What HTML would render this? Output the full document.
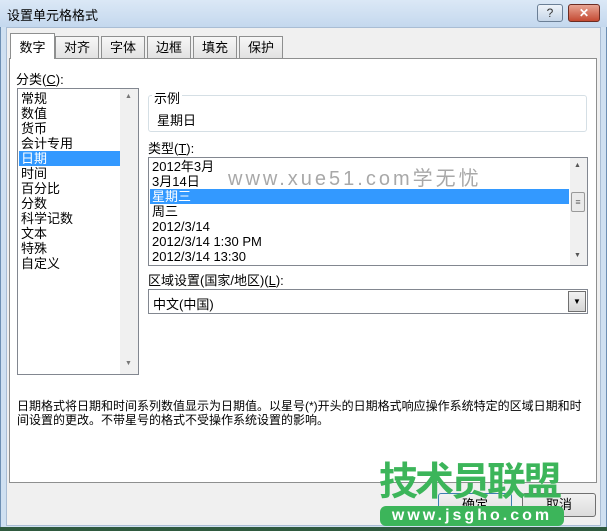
<!DOCTYPE html>
<html><head><meta charset="utf-8"><style>
*{margin:0;padding:0;box-sizing:border-box}
body{width:607px;height:531px;overflow:hidden;background:#f0f0f0;font-family:"Liberation Sans","Noto Sans CJK SC",sans-serif;font-size:12px;color:#000;position:relative}
.a{position:absolute}
.frame{left:0;top:0;width:607px;height:531px;background:#cfe0f1;border:1px solid #6d8fb3}
.title{left:0;top:0;width:607px;height:27px;background:linear-gradient(#dbe8f6,#c4d8ee)}
.body{left:6px;top:27px;width:595px;height:499px;background:#f0f0f0;border:1px solid #a9bdd4}
.tab{top:36px;height:22px;background:linear-gradient(#f7f7f7,#e2e2e2);border:1px solid #8e8f8f;border-bottom:none;text-align:center;line-height:21px;font-size:13px}
.panel{left:9px;top:58px;width:588px;height:425px;background:#fff;border:1px solid #8e8f8f}
.list{background:#fff;border:1px solid #828790}
.it{position:absolute;left:3px;height:15px;line-height:15px;font-size:13px;white-space:nowrap}
.sel{background:#3399ff;color:#fff}
.sb{background:#f0f0f0}
.btn{border:1px solid #707070;border-radius:3px;background:linear-gradient(#f2f2f2,#dcdcdc);text-align:center;line-height:22px;font-size:13px}
</style></head><body>
<div class="a frame"></div>
<div class="a title"></div>
<div class="a" style="left:7px;top:5px;font-size:13px">设置单元格格式</div>
<div class="a" style="left:537px;top:4px;width:26px;height:18px;border:1px solid #6b7f96;border-radius:3px;background:linear-gradient(#eef3f9,#c6d6e8);text-align:center;font-size:12px;line-height:16px;color:#333">?</div>
<div class="a" style="left:568px;top:4px;width:32px;height:18px;border:1px solid #6b2c23;border-radius:3px;background:linear-gradient(#e8a594,#c44a32);text-align:center;color:#fff;font-weight:bold;font-size:12px;line-height:16px">✕</div>
<div class="a body"></div>
<div class="a panel"></div>
<div class="a tab" style="left:10px;top:33px;width:45px;height:26px;background:#fff;z-index:2;line-height:27px">数字</div>
<div class="a tab" style="left:55px;width:44px">对齐</div>
<div class="a tab" style="left:101px;width:44px">字体</div>
<div class="a tab" style="left:147px;width:44px">边框</div>
<div class="a tab" style="left:193px;width:44px">填充</div>
<div class="a tab" style="left:239px;width:44px">保护</div>

<div class="a" style="left:16px;top:69px;font-size:13px">分类(<u>C</u>):</div>
<div class="a list" style="left:17px;top:88px;width:122px;height:287px">
<div class="a sb" style="left:102px;top:0;width:18px;height:285px"></div>
<div class="a" style="left:107px;top:4px;font-size:7px;color:#777">▲</div>
<div class="a" style="left:107px;top:271px;font-size:7px;color:#777">▼</div>
<div class="it" style="top:2px">常规</div>
<div class="it" style="top:17px">数值</div>
<div class="it" style="top:32px">货币</div>
<div class="it" style="top:47px">会计专用</div>
<div class="it sel" style="top:62px;left:1px;width:101px;padding-left:2px">日期</div>
<div class="it" style="top:77px">时间</div>
<div class="it" style="top:92px">百分比</div>
<div class="it" style="top:107px">分数</div>
<div class="it" style="top:122px">科学记数</div>
<div class="it" style="top:137px">文本</div>
<div class="it" style="top:152px">特殊</div>
<div class="it" style="top:167px">自定义</div>
</div>

<div class="a" style="left:148px;top:95px;width:439px;height:37px;border:1px solid #d5dfe5;border-radius:3px"></div>
<div class="a" style="left:152px;top:88px;background:#fff;padding:0 2px;font-size:13px">示例</div>
<div class="a" style="left:157px;top:110px;font-size:13px">星期日</div>

<div class="a" style="left:148px;top:138px;font-size:13px">类型(<u>T</u>):</div>
<div class="a list" style="left:148px;top:157px;width:440px;height:109px">
<div class="a sb" style="left:421px;top:0;width:17px;height:107px"></div>
<div class="a" style="left:422px;top:34px;width:14px;height:20px;border:1px solid #999;border-radius:2px;background:#eaeaea;font-size:9px;text-align:center;line-height:18px;color:#666">≡</div>
<div class="a" style="left:425px;top:4px;font-size:7px;color:#555">▲</div>
<div class="a" style="left:425px;top:94px;font-size:7px;color:#555">▼</div>
<div class="it" style="top:1px">2012年3月</div>
<div class="it" style="top:16px">3月14日</div>
<div class="it sel" style="top:31px;left:1px;width:419px;padding-left:2px">星期三</div>
<div class="it" style="top:46px">周三</div>
<div class="it" style="top:61px">2012/3/14</div>
<div class="it" style="top:76px">2012/3/14 1:30 PM</div>
<div class="it" style="top:91px">2012/3/14 13:30</div>
</div>
<div class="a" style="left:228px;top:162px;font-size:20px;letter-spacing:3px;color:#9a9a9a;opacity:.85">www.xue51.com学无忧</div>

<div class="a" style="left:148px;top:270px;font-size:13px">区域设置(国家/地区)(<u>L</u>):</div>
<div class="a" style="left:148px;top:289px;width:440px;height:25px;border:1px solid #828790;background:#fff">
<div class="a" style="left:4px;top:4px;font-size:13px">中文(中国)</div>
<div class="a" style="left:419px;top:1px;width:18px;height:21px;border:1px solid #707070;background:linear-gradient(#f2f2f2,#d5d5d5);font-size:8px;text-align:center;line-height:20px">▼</div>
</div>

<div class="a" style="left:17px;top:399px;font-size:12px;line-height:14px;width:575px">日期格式将日期和时间系列数值显示为日期值。以星号(*)开头的日期格式响应操作系统特定的区域日期和时间设置的更改。不带星号的格式不受操作系统设置的影响。</div>

<div class="a btn" style="left:438px;top:493px;width:74px;height:24px;border-color:#3c7fb1">确定</div>
<div class="a btn" style="left:522px;top:493px;width:74px;height:24px">取消</div>
<div class="a" style="left:0;top:527px;width:607px;height:4px;background:#2f5a3f"></div>

<div class="a" style="left:379px;top:459px;font-size:39px;font-weight:bold;color:#3cb55a;letter-spacing:-3px;line-height:48px">技术员联盟</div>
<div class="a" style="left:380px;top:506px;width:184px;height:20px;background:#3cb55a;border-radius:6px;color:#fff;font-weight:bold;font-size:16px;letter-spacing:3px;text-align:center;line-height:20px">www.jsgho.com</div>
</body></html>
